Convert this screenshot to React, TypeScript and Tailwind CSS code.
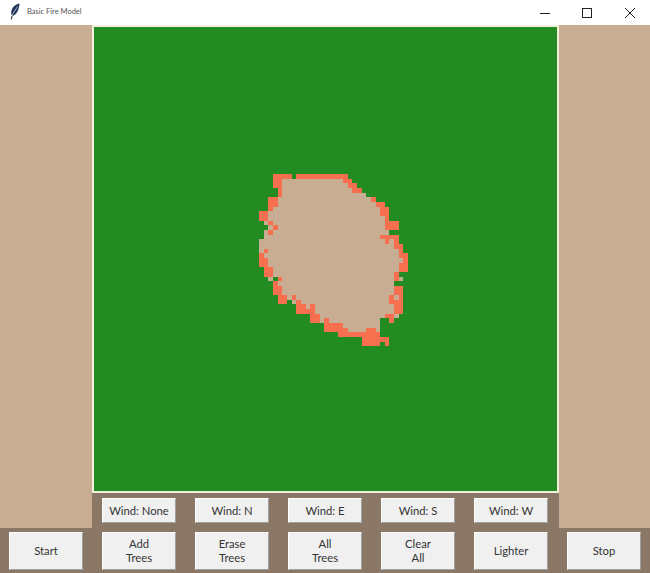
const tan = "#c9ad93";
const fire = "#f6704f";
const green = "#228b22";

// One entry per grid row: tan runs, orange runs, green runs (in simulation cells)
const rows: [number[][], number[][], number[][]?][] = [
  [[], [[3, 6], [8, 18]]],
  [[[4, 17]], [[3, 4], [18, 19]]],
  [[[5, 18]], [[3, 4], [19, 20]]],
  [[[5, 19]], [[4, 4], [20, 21]]],
  [[[5, 22]], [[4, 4]]],
  [[[4, 23]], [[2, 3], [24, 24]]],
  [[[4, 24]], [[2, 3], [25, 26]]],
  [[[3, 25]], [[2, 2], [26, 27]]],
  [[[2, 25]], [[0, 1], [26, 27]]],
  [[[2, 26]], [[0, 1], [27, 27]]],
  [[[1, 26]], [[2, 2], [27, 29]]],
  [[[2, 26]], [[3, 3], [27, 29]]],
  [[[1, 27]], [[2, 2]]],
  [[[1, 25]], [[26, 29]]],
  [[[0, 28]], [[27, 27], [29, 29]]],
  [[[0, 28]], [[29, 30]]],
  [[[0, 29]], [[1, 1], [30, 30]]],
  [[[1, 29]], [[0, 0], [30, 31]]],
  [[[2, 30]], [[0, 1], [31, 31]]],
  [[[2, 29]], [[0, 1], [30, 31]]],
  [[[3, 29]], [[1, 2], [30, 31]]],
  [[[3, 28]], [[1, 2], [29, 29]]],
  [[[2, 2], [5, 28], [30, 30]], [[4, 4], [29, 29]], [[3, 3]]],
  [[[4, 28]], [[3, 3]]],
  [[[5, 28]], [[3, 4], [29, 30]]],
  [[[5, 28]], [[3, 4], [29, 30]]],
  [[[6, 27], [29, 29]], [[4, 5], [7, 7], [28, 28], [30, 30]]],
  [[[7, 7], [9, 27]], [[4, 5], [8, 8], [28, 30]], [[6, 6]]],
  [[[10, 28]], [[8, 9], [11, 11], [29, 30]]],
  [[[12, 28]], [[8, 11], [29, 30]]],
  [[[13, 26], [29, 29]], [[11, 12], [27, 28]]],
  [[[13, 25]], [[11, 12], [14, 14], [28, 28]]],
  [[[18, 25]], [[14, 17]]],
  [[[19, 25]], [[14, 18], [23, 24]]],
  [[], [[17, 25]]],
  [[], [[22, 27]]],
  [[], [[22, 25], [27, 27]], [[26, 26]]],
];

const X0 = 259 - 94;
const Y0 = 174 - 27;
const C = 4.66;

function runRect(r: number, a: number, b: number, fill: string, key: string) {
  const x = Math.round(X0 + a * C);
  const x2 = Math.round(X0 + (b + 1) * C);
  const y = Math.round(Y0 + r * C);
  const y2 = Math.round(Y0 + (r + 1) * C);
  return <rect key={key} x={x} y={y} width={x2 - x} height={y2 - y} fill={fill} />;
}

function Btn({ lines, h }: { lines: string[]; h: string }) {
  return (
    <button
      className={`w-[74px] ${h} shrink-0 flex flex-col items-center justify-center bg-[#f0f0f0] border-t border-l border-t-white border-l-white border-r border-b border-r-[#a0a0a0] border-b-[#a0a0a0] text-[11.25px] leading-[14px] text-[#333333]`}
    >
      {lines.map((l) => (
        <span key={l}>{l}</span>
      ))}
    </button>
  );
}

export default function App() {
  return (
    <div
      className="w-[650px] h-[573px] flex flex-col overflow-hidden bg-[#8b7765]"
      style={{ fontFamily: 'Lato, "Open Sans", sans-serif' }}
    >
      <div className="h-[25px] shrink-0 bg-white flex items-center">
        <svg className="ml-[9px] mt-[-3px]" width="12" height="17" viewBox="0 0 12 17">
          <path d="M10.5 0.5C7 1 3.5 3.5 2.5 7.5C2 9.5 2.2 11.5 3 13C6 12.5 8.5 9.5 9.5 6C10 4 10.5 2 10.5 0.5Z" fill="#24365c" />
          <path d="M8.5 3.5L3.5 11.5L2.6 16.5" fill="none" stroke="#dfe6f0" strokeWidth="0.7" />
          <path d="M3 13L2.4 16.5" fill="none" stroke="#222a3c" strokeWidth="1" />
        </svg>
        <span className="ml-[6px] text-[7.5px] leading-none text-[#555555] mt-[-1px]">Basic Fire Model</span>
        <div className="ml-auto flex items-center">
          <svg className="mr-[32px]" width="10" height="10" viewBox="0 0 10 10">
            <path d="M0 5.5H10" stroke="#222222" strokeWidth="1" />
          </svg>
          <svg className="mr-[33px]" width="10" height="10" viewBox="0 0 10 10">
            <rect x="0.5" y="0.5" width="9" height="9" fill="none" stroke="#222222" strokeWidth="1" />
          </svg>
          <svg className="mr-[15px]" width="10" height="10" viewBox="0 0 10 10">
            <path d="M0 0L10 10M10 0L0 10" stroke="#222222" strokeWidth="1" />
          </svg>
        </div>
      </div>

      <div className="h-[503px] shrink-0 flex">
        <div className="w-[92px] shrink-0 bg-[#c9ad93]" />
        <div className="w-[467px] shrink-0 flex flex-col">
          <svg
            width="467"
            height="468"
            viewBox="0 0 463 464"
            preserveAspectRatio="none"
            shapeRendering="crispEdges"
            className="block shrink-0 border-2 border-[#f3f1dc] bg-[#228b22]"
            style={{ width: 467, height: 468 }}
          >
            {rows.map((row, r) => (
              <g key={r}>
                {row[0].map(([a, b], i) => runRect(r, a, b, tan, `t${i}`))}
                {row[1].map(([a, b], i) => runRect(r, a, b, fire, `o${i}`))}
                {(row[2] ?? []).map(([a, b], i) => runRect(r, a, b, green, `g${i}`))}
              </g>
            ))}
          </svg>
          <div className="flex gap-[19px] pl-[10px] pt-[5px]">
            {["Wind: None", "Wind: N", "Wind: E", "Wind: S", "Wind: W"].map((t) => (
              <Btn key={t} lines={[t]} h="h-[25px]" />
            ))}
          </div>
        </div>
        <div className="flex-1 bg-[#c9ad93]" />
      </div>

      <div className="flex gap-[19px] pl-[9px] pt-[4px]">
        <Btn lines={["Start"]} h="h-[38px]" />
        <Btn lines={["Add", "Trees"]} h="h-[38px]" />
        <Btn lines={["Erase", "Trees"]} h="h-[38px]" />
        <Btn lines={["All", "Trees"]} h="h-[38px]" />
        <Btn lines={["Clear", "All"]} h="h-[38px]" />
        <Btn lines={["Lighter"]} h="h-[38px]" />
        <Btn lines={["Stop"]} h="h-[38px]" />
      </div>
    </div>
  );
}
